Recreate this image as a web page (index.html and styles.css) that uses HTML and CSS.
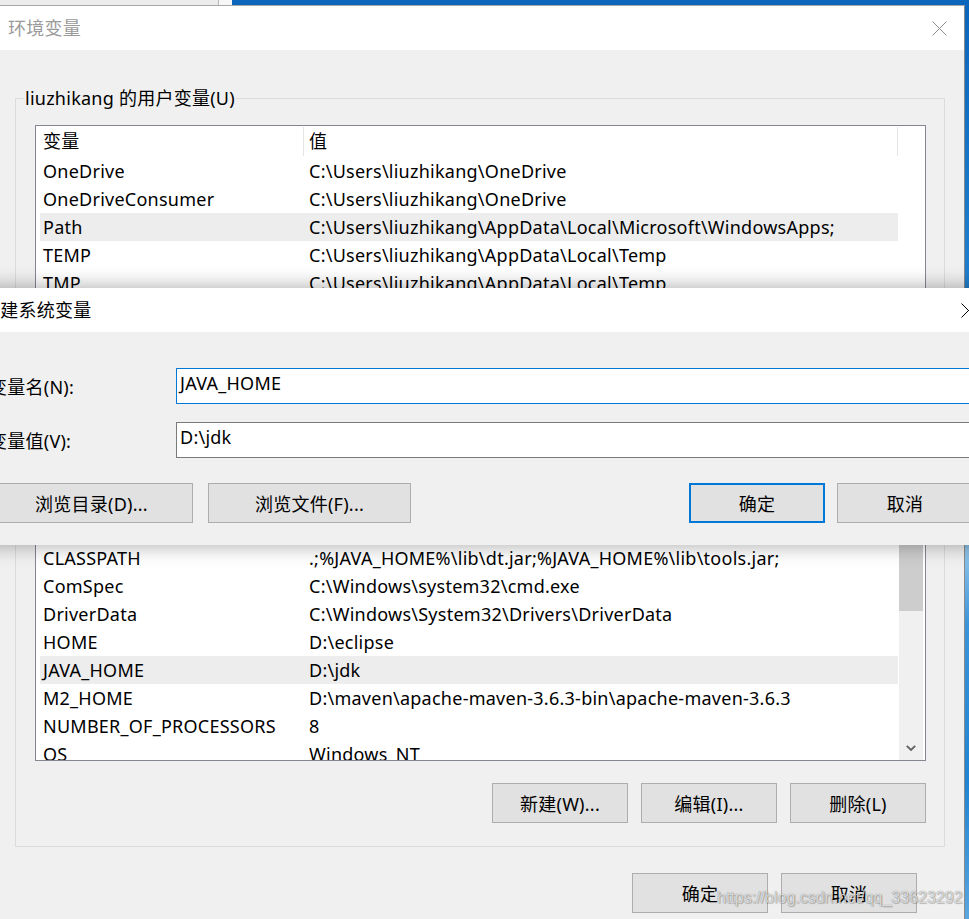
FILE: index.html
```html
<!DOCTYPE html>
<html lang="zh-CN">
<head>
<meta charset="utf-8">
<title>环境变量</title>
<link rel="stylesheet" href="styles.css">
</head>
<body>
<div class="bgwin bgwin-a"></div>
<div class="bgwin bgwin-b"></div>

<div class="win main">
  <div class="titlebar">
    <span class="title inactive">环境变量</span>
    <svg class="close inactive-x" width="15" height="15" viewBox="0 0 15 15"><path d="M0.5 0.5 L14.5 14.5 M14.5 0.5 L0.5 14.5" fill="none" stroke="currentColor" stroke-width="1"/></svg>
  </div>
  <div class="content">
    <fieldset class="group group-user">
      <legend>liuzhikang 的用户变量(U)</legend>
      <div class="list list-user">
        <div class="cols">
          <div class="hdr"><div class="c1">变量</div><div class="c2">值</div></div>
          <div class="row"><div class="c1">OneDrive</div><div class="c2">C:\Users\liuzhikang\OneDrive</div></div>
          <div class="row"><div class="c1">OneDriveConsumer</div><div class="c2">C:\Users\liuzhikang\OneDrive</div></div>
          <div class="row sel"><div class="c1">Path</div><div class="c2">C:\Users\liuzhikang\AppData\Local\Microsoft\WindowsApps;</div></div>
          <div class="row"><div class="c1">TEMP</div><div class="c2">C:\Users\liuzhikang\AppData\Local\Temp</div></div>
          <div class="row"><div class="c1">TMP</div><div class="c2">C:\Users\liuzhikang\AppData\Local\Temp</div></div>
        </div>
        <div class="vspace"></div>
      </div>
      <div class="btnrow">
        <div class="btn">新建(N)...</div>
        <div class="btn">编辑(E)...</div>
        <div class="btn">删除(D)</div>
      </div>
    </fieldset>

    <fieldset class="group group-sys">
      <legend>系统变量(S)</legend>
      <div class="list list-sys">
        <div class="cols">
          <div class="hdr"><div class="c1">变量</div><div class="c2">值</div></div>
          <div class="row"><div class="c1">CLASSPATH</div><div class="c2">.;%JAVA_HOME%\lib\dt.jar;%JAVA_HOME%\lib\tools.jar;</div></div>
          <div class="row"><div class="c1">ComSpec</div><div class="c2">C:\Windows\system32\cmd.exe</div></div>
          <div class="row"><div class="c1">DriverData</div><div class="c2">C:\Windows\System32\Drivers\DriverData</div></div>
          <div class="row"><div class="c1">HOME</div><div class="c2">D:\eclipse</div></div>
          <div class="row sel"><div class="c1">JAVA_HOME</div><div class="c2">D:\jdk</div></div>
          <div class="row"><div class="c1">M2_HOME</div><div class="c2">D:\maven\apache-maven-3.6.3-bin\apache-maven-3.6.3</div></div>
          <div class="row"><div class="c1">NUMBER_OF_PROCESSORS</div><div class="c2">8</div></div>
          <div class="row"><div class="c1">OS</div><div class="c2">Windows_NT</div></div>
        </div>
        <div class="vscroll">
          <div class="sb-up"></div>
          <div class="sb-thumb"></div>
          <div class="sb-track"></div>
          <div class="sb-down">
            <svg width="10" height="6" viewBox="0 0 10 6"><path d="M0.8 0.8 L5 5 L9.2 0.8" fill="none" stroke="#606060" stroke-width="1.8"/></svg>
          </div>
        </div>
      </div>
      <div class="btnrow">
        <div class="btn">新建(W)...</div>
        <div class="btn">编辑(I)...</div>
        <div class="btn">删除(L)</div>
      </div>
    </fieldset>

    <div class="footer">
      <div class="btn">确定</div>
      <div class="btn">取消</div>
    </div>
  </div>
</div>

<div class="win dialog">
  <div class="titlebar">
    <span class="title">新建系统变量</span>
    <svg class="close" width="15" height="15" viewBox="0 0 15 15"><path d="M0.5 0.5 L14.5 14.5 M14.5 0.5 L0.5 14.5" fill="none" stroke="currentColor" stroke-width="1"/></svg>
  </div>
  <div class="dbody">
    <div class="field">
      <label class="flabel">变量名(N):</label>
      <div class="input focus">JAVA_HOME</div>
    </div>
    <div class="field">
      <label class="flabel">变量值(V):</label>
      <div class="input">D:\jdk</div>
    </div>
    <div class="dbtns">
      <div class="btn wide">浏览目录(D)...</div>
      <div class="btn wide">浏览文件(F)...</div>
      <div class="spacer"></div>
      <div class="btn default">确定</div>
      <div class="btn">取消</div>
    </div>
  </div>
</div>

<div class="watermark">https://blog.csdn.net/qq_33623292</div>
</body>
</html>
```

FILE: styles.css
```css
* { box-sizing: border-box; }

html, body {
  margin: 0;
  padding: 0;
}

body {
  width: 969px;
  height: 919px;
  overflow: hidden;
  position: relative;
  font-family: "Noto Sans", "Noto Sans CJK SC", sans-serif;
  font-size: 18px;
  letter-spacing: 0.25px;
  color: #000;
  background: linear-gradient(180deg, #0c66bb 0%, #1677c9 20%, #2b8ad6 45%, #8fc4ea 60%, #3a94da 68%, #1f84d3 85%, #5aa6e0 100%);
}

/* windows peeking behind, top-left */
.bgwin {
  position: absolute;
  top: 0;
  height: 6px;
}
.bgwin-a {
  left: 0;
  width: 219px;
  background: #ececec;
  border-right: 1px solid #b9b9b9;
}
.bgwin-b {
  left: 219px;
  width: 13px;
  background: #f7f7f7;
}

/* generic window */
.win {
  background: #f0f0f0;
}

.titlebar {
  height: 44px;
  background: #fff;
  display: flex;
  align-items: center;
  justify-content: space-between;
  padding: 0 17px 0 8px;
}

.title {
  font-size: 18px;
  line-height: 24px;
  white-space: nowrap;
}
.title.inactive { color: #9a9a9a; }

.close { display: block; color: #000; }
.close.inactive-x { color: #8e8e8e; }

/* main window */
.main {
  position: absolute;
  left: 0;
  top: 5px;
  width: 965px;
  height: 930px;
  border-top: 1px solid #a8a8a8;
  border-right: 1px solid #8a8a8a;
}

.content {
  padding: 38px 0 0 15px;
}

.group {
  margin: 0;
  width: 930px;
  min-width: 0;
  border: 1px solid #dcdcdc;
  padding: 17px 18px 23px 19px;
}
.group + .group { margin-top: 13px; }

.group legend {
  font-size: 18px;
  line-height: 20px;
  padding: 0 1px;
  margin-left: -11px;
  white-space: nowrap;
}

.list {
  border: 1px solid #828790;
  background: #fff;
  display: flex;
  overflow: hidden;
}
.list-user { height: 250px; }
.list-sys { height: 249px; }

.cols {
  width: 862px;
  padding-left: 4px;
  flex: none;
}

.hdr {
  height: 31px;
  display: flex;
}
.hdr .c1 {
  width: 264px;
  height: 29px;
  margin: 1px 0;
  padding-left: 3px;
  line-height: 29px;
  border-right: 1px solid #e5e5e5;
}
.hdr .c2 {
  flex: 1;
  height: 29px;
  margin: 1px 0;
  padding-left: 5px;
  line-height: 29px;
  border-right: 1px solid #e5e5e5;
}

.row {
  height: 28px;
  line-height: 28px;
  display: flex;
  white-space: nowrap;
}
.row.sel { background: #ededed; }
.row .c1 {
  width: 264px;
  padding-left: 3px;
  overflow: hidden;
}
.row .c2 {
  flex: 1;
  padding-left: 5px;
  overflow: hidden;
}

.vspace { flex: 1; }

.vscroll {
  flex: 1;
  display: flex;
  flex-direction: column;
  padding: 0 2px 0 1px;
}
.sb-up, .sb-track, .sb-down { background: #f0f0f0; }
.sb-up { height: 25px; }
.sb-thumb { height: 73px; background: #cdcdcd; }
.sb-track { flex: 1; }
.sb-down {
  height: 25px;
  display: flex;
  align-items: center;
  justify-content: center;
}
.sb-down svg { display: block; }

.btnrow {
  display: flex;
  justify-content: flex-end;
  gap: 13px;
  margin-top: 23px;
}
.group-sys .btnrow { margin-top: 22px; }

.btn {
  width: 136px;
  height: 40px;
  background: #e1e1e1;
  border: 1px solid #adadad;
  display: flex;
  align-items: center;
  justify-content: center;
  font-size: 18px;
  white-space: nowrap;
}
.btn.default { border: 2px solid #0078d7; }
.btn.wide { width: 203px; }

.footer {
  width: 902px;
  margin-top: 26px;
  display: flex;
  justify-content: flex-end;
  gap: 13px;
}

/* new system variable dialog */
.dialog {
  position: absolute;
  left: -26px;
  top: 288px;
  width: 1019px;
  height: 257px;
  box-shadow: 0 0 18px 2px rgba(0, 0, 0, 0.3);
}

.dbody {
  padding: 36px 20px 0 15px;
}

.field {
  display: flex;
  align-items: center;
}
.field + .field { margin-top: 18px; }

.flabel {
  width: 187px;
  flex: none;
  white-space: nowrap;
}

.input {
  flex: 1;
  height: 36px;
  border: 1px solid #7a7a7a;
  background: #fff;
  padding: 0 3px;
  line-height: 28px;
  white-space: nowrap;
}
.input.focus { border-color: #0078d7; }

.dbtns {
  display: flex;
  margin-top: 25px;
  padding-left: 1px;
}
.dbtns .btn.wide + .btn.wide { margin-left: 15px; }
.spacer { flex: 1; }
.dbtns .default + .btn { margin-left: 12px; }

.watermark {
  position: absolute;
  left: 717px;
  top: 888px;
  font-family: "Liberation Sans", Arial, sans-serif;
  font-size: 16px;
  line-height: 20px;
  letter-spacing: 0;
  color: rgba(255, 255, 255, 0.72);
  text-shadow: 0 0 1px rgba(0, 0, 0, 0.5), 1px 1px 1px rgba(0, 0, 0, 0.2);
  white-space: nowrap;
}
```
